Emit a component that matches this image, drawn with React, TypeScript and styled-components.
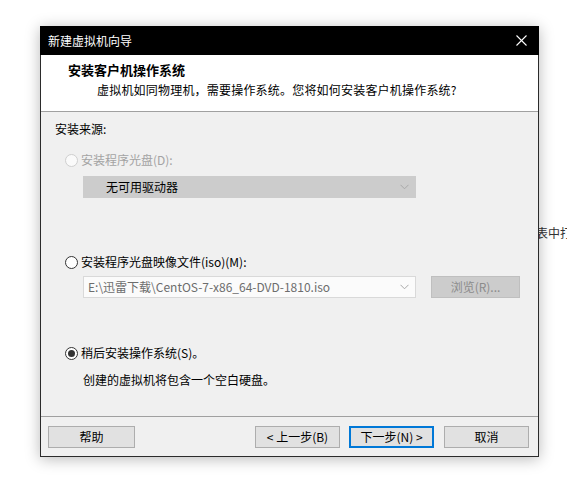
import React from "react";
import styled, { createGlobalStyle, css } from "styled-components";

const GlobalStyle = createGlobalStyle`
  html, body {
    margin: 0;
    padding: 0;
    background: #ffffff;
    overflow: hidden;
  }
  body {
    font-family: "Noto Sans CJK SC", "Noto Sans", sans-serif;
    font-size: 12px;
    color: #000;
  }
`;

const Page = styled.div`
  position: relative;
  width: 567px;
  height: 497px;
  box-sizing: border-box;
  padding: 26px 0 0 40px;
  overflow: hidden;
`;

const BackdropText = styled.span`
  position: absolute;
  left: 536px;
  top: 224px;
  font-size: 12px;
  line-height: 18px;
  color: #333;
  white-space: nowrap;
`;

const Dialog = styled.div`
  position: relative;
  z-index: 1;
  width: 499px;
  box-sizing: border-box;
  border: 1px solid #2b2b2b;
  border-top: none;
  background: #f0f0f0;
  box-shadow: 0 2px 14px rgba(0, 0, 0, 0.28);
  display: flex;
  flex-direction: column;
`;

const TitleBar = styled.div`
  height: 29px;
  margin: 0 -1px;
  background: #000;
  color: #fff;
  display: flex;
  align-items: center;
  justify-content: space-between;
  padding-left: 8px;
  font-size: 12px;
  line-height: 16px;
`;

const CloseBox = styled.div`
  width: 34px;
  height: 29px;
  display: flex;
  align-items: center;
  justify-content: center;
  margin-right: 1px;
`;

const Header = styled.div`
  height: 57px;
  box-sizing: border-box;
  background: #fff;
  border-bottom: 1px solid #a0a0a0;
  padding: 6px 0 0 27px;
`;

const HeaderTitle = styled.div`
  font-size: 13px;
  font-weight: bold;
  line-height: 18px;
`;

const HeaderSub = styled.div`
  font-size: 12px;
  line-height: 19px;
  letter-spacing: 0.2px;
  padding-left: 29px;
  margin-top: 1px;
`;

const Body = styled.div`
  height: 304px;
  box-sizing: border-box;
  padding: 8px 14px 0;
  display: flex;
  flex-direction: column;
  align-items: flex-start;
`;

const Label = styled.div<{ $mt?: number; $ml?: number }>`
  line-height: 18px;
  margin-top: ${(p) => p.$mt ?? 0}px;
  margin-left: ${(p) => p.$ml ?? 0}px;
`;

const RadioRow = styled.label<{ $mt: number; $disabled?: boolean }>`
  display: flex;
  align-items: center;
  gap: 3px;
  margin-top: ${(p) => p.$mt}px;
  margin-left: 10px;
  line-height: 18px;
  color: ${(p) => (p.$disabled ? "#a3a3a3" : "#000")};
`;

const RadioCircle = styled.span<{ $checked?: boolean; $disabled?: boolean }>`
  width: 13px;
  height: 13px;
  box-sizing: border-box;
  border-radius: 50%;
  border: 1px solid ${(p) => (p.$disabled ? "#cfcfcf" : "#333")};
  background: ${(p) => (p.$disabled ? "#fafafa" : "#fff")};
  display: flex;
  align-items: center;
  justify-content: center;
  ${(p) =>
    p.$checked &&
    css`
      &::after {
        content: "";
        width: 7px;
        height: 7px;
        border-radius: 50%;
        background: #333;
      }
    `}
`;

const Combo = styled.div<{ $disabled?: boolean; $mt: number }>`
  width: 333px;
  height: 22px;
  box-sizing: border-box;
  margin-top: ${(p) => p.$mt}px;
  display: flex;
  align-items: center;
  justify-content: space-between;
  line-height: 18px;
  ${(p) =>
    p.$disabled
      ? css`
          background: #cccccc;
          border: 1px solid #cccccc;
          color: #000;
          padding: 0 6px 0 22px;
        `
      : css`
          background: #fbfbfb;
          border: 1px solid #d9d9d9;
          color: #6d6d6d;
          padding: 0 6px 0 4px;
        `}
`;

const FileRow = styled.div`
  display: flex;
  align-items: center;
  gap: 15px;
  margin-top: 4px;
  margin-left: 28px;
`;

const BrowseButton = styled.div`
  width: 89px;
  height: 22px;
  box-sizing: border-box;
  background: #cccccc;
  border: 1px solid #bfbfbf;
  color: #8b8b8b;
  display: flex;
  align-items: center;
  justify-content: center;
  line-height: 18px;
  margin-top: 1px;
`;

const Footer = styled.div`
  border-top: 1px solid #a0a0a0;
  padding: 9px 9px 8px 7px;
  display: flex;
  align-items: center;
`;

const Spacer = styled.div`
  flex: 1;
`;

const Button = styled.div<{ $primary?: boolean; $w?: number; $ml?: number }>`
  width: ${(p) => p.$w ?? 85}px;
  height: 22px;
  box-sizing: border-box;
  margin-left: ${(p) => p.$ml ?? 0}px;
  background: #e1e1e1;
  border: ${(p) => (p.$primary ? "2px solid #0078d7" : "1px solid #adadad")};
  display: flex;
  align-items: center;
  justify-content: center;
  line-height: 18px;
  color: #000;
`;

const Chevron = () => (
  <svg width="9" height="6" viewBox="0 0 9 6">
    <polyline points="0.5,0.8 4.5,4.8 8.5,0.8" fill="none" stroke="#a8a8a8" strokeWidth="1" />
  </svg>
);

const CloseIcon = () => (
  <svg width="11" height="11" viewBox="0 0 11 11">
    <line x1="0.5" y1="0.5" x2="10.5" y2="10.5" stroke="#fff" strokeWidth="1.1" />
    <line x1="10.5" y1="0.5" x2="0.5" y2="10.5" stroke="#fff" strokeWidth="1.1" />
  </svg>
);

export default function App() {
  return (
    <>
      <GlobalStyle />
      <Page>
        <BackdropText>表中打开</BackdropText>
        <Dialog>
          <TitleBar>
            <span>新建虚拟机向导</span>
            <CloseBox>
              <CloseIcon />
            </CloseBox>
          </TitleBar>
          <Header>
            <HeaderTitle>安装客户机操作系统</HeaderTitle>
            <HeaderSub>虚拟机如同物理机，需要操作系统。您将如何安装客户机操作系统?</HeaderSub>
          </Header>
          <Body>
            <Label>安装来源:</Label>
            <RadioRow $mt={13} $disabled>
              <RadioCircle $disabled />
              安装程序光盘(D):
            </RadioRow>
            <Label $ml={28}>
              <Combo $disabled $mt={7}>
                <span>无可用驱动器</span>
                <Chevron />
              </Combo>
            </Label>
            <RadioRow $mt={55}>
              <RadioCircle />
              安装程序光盘映像文件(iso)(M):
            </RadioRow>
            <FileRow>
              <Combo $mt={0}>
                <span>E:\迅雷下载\CentOS-7-x86_64-DVD-1810.iso</span>
                <Chevron />
              </Combo>
              <BrowseButton>浏览(R)...</BrowseButton>
            </FileRow>
            <RadioRow $mt={46}>
              <RadioCircle $checked />
              稍后安装操作系统(S)。
            </RadioRow>
            <Label $mt={9} $ml={28}>
              创建的虚拟机将包含一个空白硬盘。
            </Label>
          </Body>
          <Footer>
            <Button $w={87}>帮助</Button>
            <Spacer />
            <Button>&lt; 上一步(B)</Button>
            <Button $primary $ml={9}>
              下一步(N) &gt;
            </Button>
            <Button $ml={10}>取消</Button>
          </Footer>
        </Dialog>
      </Page>
    </>
  );
}
